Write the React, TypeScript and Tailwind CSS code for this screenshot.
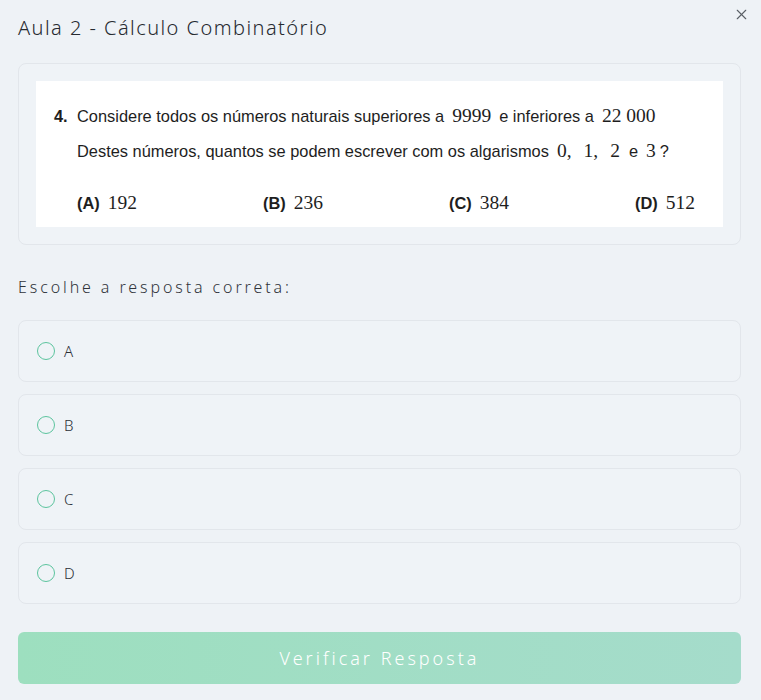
import { X } from "lucide-react";

const hand = { fontFamily: '"Noto Sans", "DejaVu Sans", sans-serif' };

const options = ["A", "B", "C", "D"];

const choices = [
  { label: "(A)", value: "192" },
  { label: "(B)", value: "236" },
  { label: "(C)", value: "384" },
  { label: "(D)", value: "512" },
];

function Num({ children, tight }: { children: React.ReactNode; tight?: boolean }) {
  return (
    <span
      className={`font-['Liberation_Serif',serif] text-[19.5px] ${
        tight ? "ml-[8px] mr-[4px]" : "mx-[8px]"
      }`}
    >
      {children}
    </span>
  );
}

export default function App() {
  return (
    <div className="min-h-[700px] w-[761px] bg-[#eef2f6] text-[#2b2f36] pl-[18px] pr-[20px] pt-[12px] pb-4">
      {/* Header */}
      <div className="flex items-start justify-between">
        <h1
          className="mt-[1px] text-[20px] font-light tracking-[1.45px] text-[#262a30]"
          style={hand}
        >
          Aula 2 - Cálculo Combinatório
        </h1>
        <button className="-mr-[9px] mt-[-6px] text-[#5a5f66]" aria-label="Fechar">
          <X className="w-[17px] h-[17px]" strokeWidth={1.6} />
        </button>
      </div>

      {/* Question image */}
      <div className="mt-[20px] rounded-lg border border-[#e2e6eb] bg-[#eff3f7] p-[17px]">
        <div className="bg-white h-[146px] pl-[18px] pt-[20px] font-['Liberation_Sans',Arial,sans-serif] text-[16.4px] text-[#1e1e1e]">
          <div className="flex items-baseline">
            <span className="font-bold w-[23px]">4.</span>
            <span>
              Considere todos os números naturais superiores a<Num>9999</Num>e
              inferiores a<Num>22 000</Num>
            </span>
          </div>
          <div className="pl-[23px] mt-[6px]">
            Destes números, quantos se podem escrever com os algarismos
            <Num tight>0,</Num>
            <Num tight>1,</Num>
            <Num tight>2</Num>
            <span className="ml-[5px]">e</span>
            <Num tight>3</Num>?
          </div>
          <div className="pl-[23px] mt-[22px] flex items-baseline">
            {choices.map((c, i) => (
              <div
                key={c.label}
                className={`flex items-baseline ${i < 3 ? "w-[186px]" : ""}`}
              >
                <span className="font-bold">{c.label}</span>
                <Num>{c.value}</Num>
              </div>
            ))}
          </div>
        </div>
      </div>

      {/* Prompt */}
      <p
        className="mt-[30px] text-[16px] font-light tracking-[2.9px] text-[#30343a]"
        style={hand}
      >
        Escolhe a resposta correta:
      </p>

      {/* Options */}
      <div className="mt-[21px] flex flex-col gap-[12px]">
        {options.map((o) => (
          <label
            key={o}
            className="flex items-center h-[62px] rounded-lg border border-[#e2e6eb] bg-[#eff3f7] pl-[18px]"
          >
            <span className="w-[18px] h-[18px] rounded-full border-[1.5px] border-[#5cc49e]" />
            <span
              className="ml-[9px] text-[15px] font-light text-[#2b2f36]"
              style={hand}
            >
              {o}
            </span>
          </label>
        ))}
      </div>

      {/* Submit */}
      <button
        className="mt-[28px] w-full h-[52px] rounded-md bg-gradient-to-r from-[#9ddfbf] to-[#a5dccb] text-white text-[18px] font-light tracking-[3px]"
        style={hand}
      >
        Verificar Resposta
      </button>
    </div>
  );
}
